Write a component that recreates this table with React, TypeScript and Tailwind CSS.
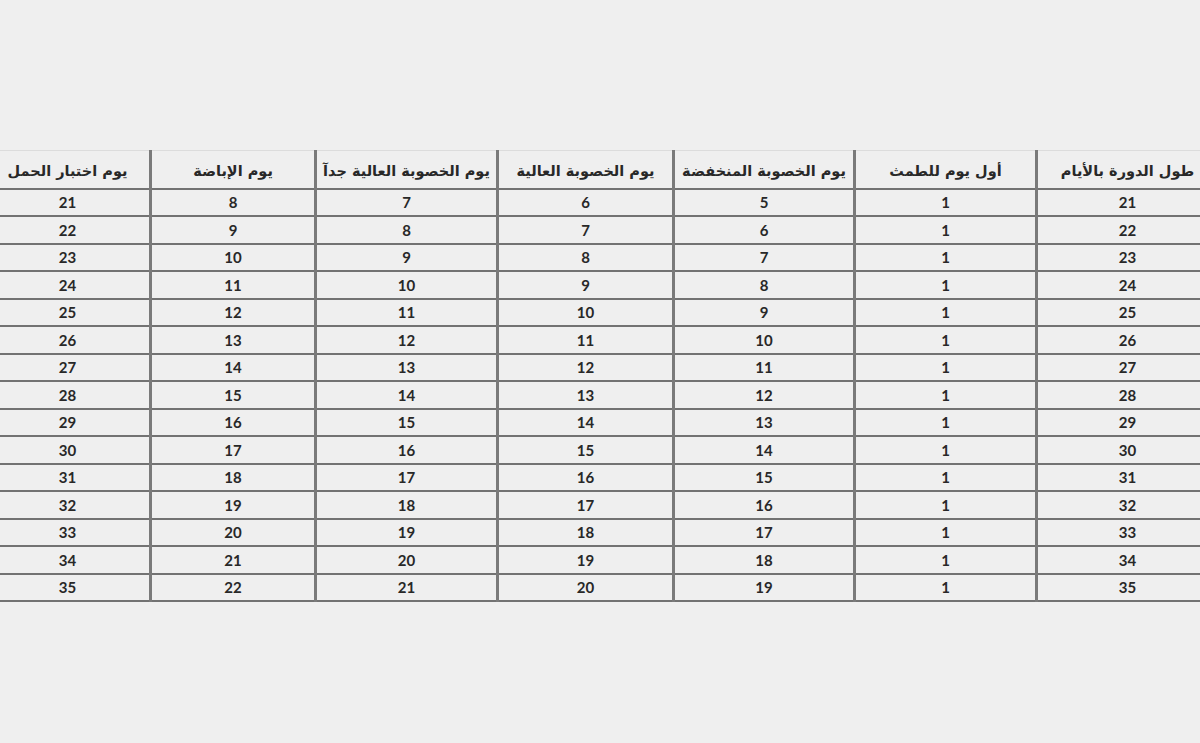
import React from 'react'

const headers = [
  'طول الدورة بالأيام',
  'أول يوم للطمث',
  'يوم الخصوبة المنخفضة',
  'يوم الخصوبة العالية',
  'يوم الخصوبة العالية جدآ',
  'يوم الإباضة',
  'يوم اختبار الحمل',
]

// column widths from right to left
const widths = ['w-[182px]', 'w-[182px]', 'w-[181px]', 'w-[176px]', 'w-[182px]', 'w-[165px]', 'w-[166px]']

const rows = Array.from({ length: 15 }, (_, i) => {
  const len = 21 + i
  return [len, 1, 5 + i, 6 + i, 7 + i, 8 + i, len]
})

const App = () => {
  return (
    <div className="w-[1200px] h-[743px] bg-[#efefef] overflow-hidden pt-[150px]">
      <div className="ml-[-17px] w-[1234px]">
        <table dir="rtl" className="border-collapse table-fixed w-[1234px] text-[#282828]">
          <colgroup>
            {widths.map((w, i) => (
              <col key={i} className={w} />
            ))}
          </colgroup>
          <thead>
            <tr className="h-[38px] border-t border-[#dcdcdc]">
              {headers.map((h, i) => (
                <th
                  key={i}
                  className="border-x-[3px] border-b-2 border-x-[#7a7a7a] border-b-[#727272] font-bold text-[14.5px] whitespace-nowrap p-0 pt-[6px] font-['DejaVu_Sans',sans-serif]"
                >
                  {h}
                </th>
              ))}
            </tr>
          </thead>
          <tbody>
            {rows.map((r, ri) => (
              <tr key={ri} className="h-[27.5px]">
                {r.map((v, ci) => (
                  <td
                    key={ci}
                    className="border-x-[3px] border-b-2 border-x-[#7a7a7a] border-b-[#727272] text-center p-0 pt-[1px] font-bold text-[15px] leading-none font-['Lato',sans-serif]"
                  >
                    {v}
                  </td>
                ))}
              </tr>
            ))}
          </tbody>
        </table>
      </div>
    </div>
  )
}

export default App
